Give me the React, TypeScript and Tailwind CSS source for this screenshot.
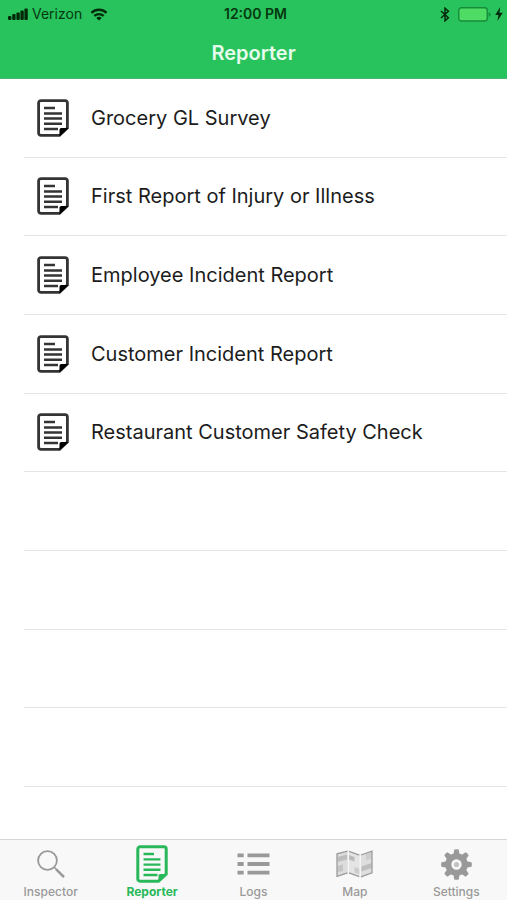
import type { ReactNode } from 'react'

const reports = [
  'Grocery GL Survey',
  'First Report of Injury or Illness',
  'Employee Incident Report',
  'Customer Incident Report',
  'Restaurant Customer Safety Check',
]

const emptyRows = [1, 2, 3, 4]

const DocumentIcon = () => (
  <svg width="32" height="38" viewBox="0 0 32 38" fill="none" aria-hidden="true">
    <path
      d="M4 1.6h24a2.4 2.4 0 0 1 2.4 2.4v25L22.5 36.4H4A2.4 2.4 0 0 1 1.6 34V4A2.4 2.4 0 0 1 4 1.6z"
      stroke="currentColor"
      strokeWidth="2.8"
    />
    <path d="M7 9h11M7 14.4h18M7 19.6h18M7 24.8h18M7 30h14" stroke="currentColor" strokeWidth="2.5" />
    <path d="M22.5 37.4v-6.6a1.8 1.8 0 0 1 1.8-1.8H31.6z" className="fill-black" />
  </svg>
)

const ReporterTabIcon = () => (
  <svg width="32" height="38" viewBox="0 0 32 38" fill="none" aria-hidden="true">
    <path
      d="M4 1.8h24a2.2 2.2 0 0 1 2.2 2.2v25L22.5 36.2H4A2.2 2.2 0 0 1 1.8 34V4A2.2 2.2 0 0 1 4 1.8z"
      stroke="currentColor"
      strokeWidth="3"
    />
    <path d="M7.5 9h10.5M7.5 14.4h17M7.5 19.6h17M7.5 24.8h17M7.5 30h14" stroke="currentColor" strokeWidth="2.4" />
    <path d="M22.5 37v-6.2a1.8 1.8 0 0 1 1.8-1.8H31z" fill="currentColor" />
  </svg>
)

const InspectorIcon = () => (
  <svg width="28" height="29" viewBox="0 0 28 29" fill="none" stroke="currentColor" aria-hidden="true">
    <circle cx="10.5" cy="10.5" r="9.4" strokeWidth="1.8" />
    <path d="M17.3 17.3l2.4 2.4" strokeWidth="1.6" />
    <path d="M19.2 19.4l7.8 7.8" strokeWidth="2.6" />
  </svg>
)

const LogsIcon = () => (
  <svg width="33" height="22" viewBox="0 0 33 22" stroke="currentColor" strokeWidth="3.8" aria-hidden="true">
    <path d="M0.5 2.3h6.2M10.5 2.3h22M0.5 11h6.2M10.5 11h22M0.5 19.6h6.2M10.5 19.6h22" />
  </svg>
)

const MapIcon = () => (
  <svg width="37" height="28" viewBox="0 0 37 28" aria-hidden="true">
    <path d="M1 3.5l11-2.5v22L1 26.5z" fill="#dcdcdc" />
    <path d="M12.5 1L24 5v22l-11.5-4z" fill="#e4e4e4" />
    <path d="M24.5 5L36 1v22l-11.5 4z" fill="#dedede" />
    <path d="M1.5 7l9.5-2.4v5L1.5 12z" fill="#bdbdbd" />
    <path d="M1.5 16l5.5-1.5v6.2l-5.5 1.6z" fill="#c4c4c4" />
    <path d="M13 5l5.5 2v4.5L13 9.5z" fill="#bababa" />
    <path d="M18.5 17l5 1.8v5.4l-5-1.8z" fill="#cbcbcb" />
    <path d="M25.5 16.5l10-3.5v5l-10 3.6z" fill="#bebebe" />
    <path d="M30 4l5.5-1.8v6.4L30 10.5z" fill="#cecece" />
    <path
      d="M11.6 1.1L1 3.8v22.6l10.6-3.5M13 1.4l10.4 3.8M13 22.9l10.4 3.8M25 5l11-3.8v21.6l-11 4"
      fill="none"
      stroke="#9b9b9b"
      strokeWidth="1.3"
    />
    <path d="M12.3 1v22M24.2 5v22" stroke="#f8f8f8" strokeWidth="1.2" />
  </svg>
)

const SettingsIcon = () => (
  <svg width="31" height="31" viewBox="-15.5 -15.5 31 31" fill="currentColor" aria-hidden="true">
    {[0, 45, 90, 135, 180, 225, 270, 315].map((angle) => (
      <path key={angle} d="M-3.2-9.5L-2.2-15q2.2-.7 4.4 0l1 5.5z" transform={`rotate(${angle})`} />
    ))}
    <circle r="8.2" fill="none" stroke="currentColor" strokeWidth="6" />
    <circle r="2.6" className="fill-[#c2c2c2]" />
  </svg>
)

const tabs: { name: string; icon: ReactNode; active?: boolean }[] = [
  { name: 'Inspector', icon: <InspectorIcon /> },
  { name: 'Reporter', icon: <ReporterTabIcon />, active: true },
  { name: 'Logs', icon: <LogsIcon /> },
  { name: 'Map', icon: <MapIcon /> },
  { name: 'Settings', icon: <SettingsIcon /> },
]

const StatusBar = () => (
  <div className="grid grid-cols-3 items-center h-7 pl-2 pr-1 text-sm text-[#06380f]">
    <div className="flex items-center gap-1">
      <svg width="20" height="12" viewBox="0 0 20 12" className="fill-[#042a0a]" aria-hidden="true">
        <rect x="0" y="8" width="3.4" height="4" rx="1" />
        <rect x="4.2" y="6" width="3.4" height="6" rx="1" />
        <rect x="8.4" y="4.4" width="3.4" height="7.6" rx="1" />
        <rect x="12.4" y="2.4" width="3.4" height="9.6" rx="1" />
        <rect x="16.4" y="0.4" width="3.4" height="11.6" rx="1" />
      </svg>
      <span>Verizon</span>
      <svg width="18" height="13" viewBox="0 0 18 13" fill="none" className="ml-1 text-[#042a0a]" aria-hidden="true">
        <path d="M1.4 4.8a11 11 0 0 1 15.2 0" stroke="currentColor" strokeWidth="2.3" />
        <path d="M4.3 7.9a7 7 0 0 1 9.4 0" stroke="currentColor" strokeWidth="2.2" />
        <path d="M9 12.6L6.3 9.9a4 4 0 0 1 5.4 0z" fill="currentColor" />
      </svg>
    </div>
    <span className="text-center font-semibold">12:00 PM</span>
    <div className="flex items-center justify-end gap-1 text-[#042a0a]">
      <svg width="10" height="15" viewBox="0 0 10 15" fill="none" stroke="currentColor" strokeWidth="1.5" className="mr-1" aria-hidden="true">
        <path d="M1 4l7.4 6.8L5 13.8V1.2l3.4 3L1 11" />
      </svg>
      <svg width="33" height="15" viewBox="0 0 33 15" aria-hidden="true">
        <rect x="0.8" y="0.8" width="28.4" height="13.2" rx="2.6" fill="#4fdc64" stroke="#168c3a" strokeWidth="1.4" />
        <path d="M30.6 5.2q2 .6 2 2.3t-2 2.3z" fill="#168c3a" />
      </svg>
      <svg width="8" height="14" viewBox="0 0 7 13" fill="currentColor" aria-hidden="true">
        <path d="M4.6 0L0 7.4h3L2 13l5-7.6H3.9z" />
      </svg>
    </div>
  </div>
)

const App = () => {
  return (
    <div className="flex flex-col min-h-screen bg-white font-['Inter','Liberation_Sans',sans-serif]">
      <header className="h-[79px] bg-[#28c35d] border-b border-[#4fb573]">
        <StatusBar />
        <h1 className="text-center text-xl leading-[50px] font-semibold text-[#e6fcec]">Reporter</h1>
      </header>

      <main className="flex flex-col flex-1">
        <ul className="grid auto-rows-fr flex-1 pl-6">
          {reports.map((report) => (
            <li key={report} className="flex min-h-14 border-b border-[#e4e4e4]">
              <button type="button" className="flex flex-1 items-center gap-[22px] pl-[13px] text-left text-xl text-[#1c1c1c]">
                <span className="text-[#343434]">
                  <DocumentIcon />
                </span>
                {report}
              </button>
            </li>
          ))}
          {emptyRows.map((row) => (
            <li key={row} className="min-h-14 border-b border-[#e4e4e4]" />
          ))}
        </ul>
        <div className="h-[52px]" />
      </main>

      <nav className="grid grid-cols-5 bg-[#f8f8f8] border-t border-[#d6d6d6]">
        {tabs.map((tab) => (
          <a
            key={tab.name}
            href={`#${tab.name.toLowerCase()}`}
            aria-current={tab.active ? 'page' : undefined}
            className={`flex flex-col items-center pt-1 text-xs ${
              tab.active ? 'text-[#28b85a] font-bold' : 'text-[#999999] font-medium'
            }`}
          >
            <span className="flex items-center h-10">{tab.icon}</span>
            {tab.name}
          </a>
        ))}
      </nav>
    </div>
  )
}

export default App
